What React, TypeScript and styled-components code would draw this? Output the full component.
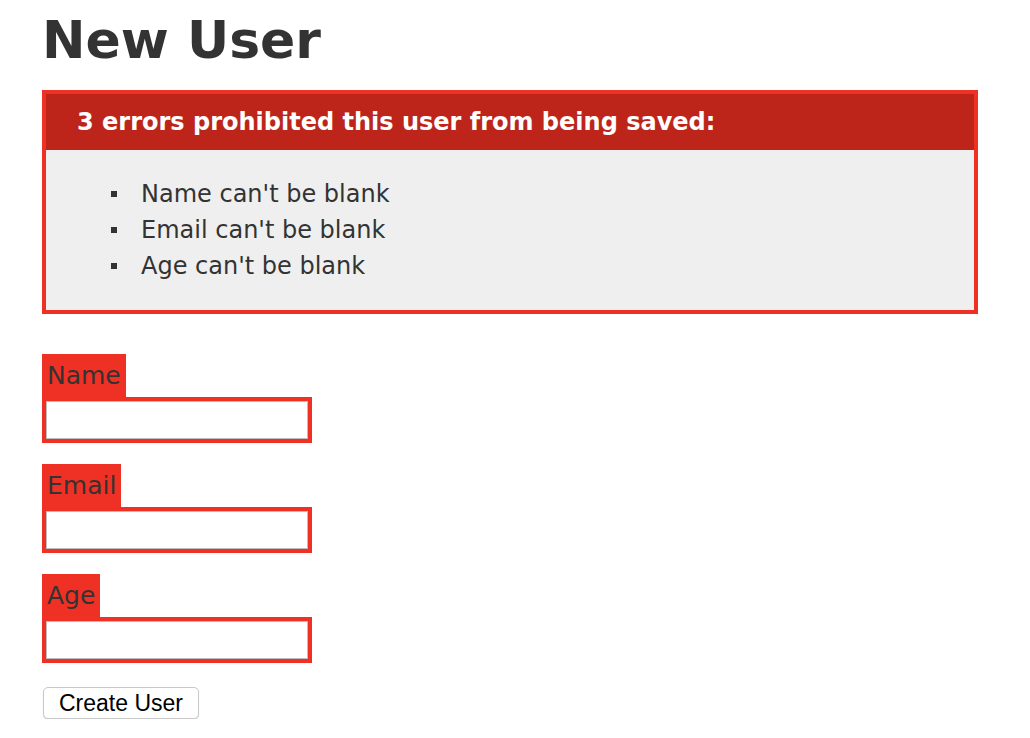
import React from "react";
import styled, { createGlobalStyle } from "styled-components";

const fields = ["Name", "Email", "Age"];

export default function App() {
  return (
    <>
      <GlobalStyle />
      <Page>
        <Title>New User</Title>

        <ErrorExplanation>
          <ErrorHeader>3 errors prohibited this user from being saved:</ErrorHeader>
          <ErrorList>
            {fields.map((f) => (
              <ErrorItem key={f}>{f} can't be blank</ErrorItem>
            ))}
          </ErrorList>
        </ErrorExplanation>

        <Form onSubmit={(e) => e.preventDefault()}>
          {fields.map((f) => (
            <Field key={f}>
              <FieldWithErrors>
                <Label htmlFor={"user_" + f.toLowerCase()}>{f}</Label>
              </FieldWithErrors>
              <FieldWithErrors>
                <TextInput id={"user_" + f.toLowerCase()} type="text" />
              </FieldWithErrors>
            </Field>
          ))}
          <Actions>
            <SubmitButton type="submit">Create User</SubmitButton>
          </Actions>
        </Form>
      </Page>
    </>
  );
}

const GlobalStyle = createGlobalStyle`
  html, body {
    margin: 0;
    padding: 0;
    background: #fff;
  }
  body {
    color: #333;
    font-family: "DejaVu Sans", Verdana, sans-serif;
  }
`;

const Page = styled.div`
  padding: 10px 42px 0 42px;
`;

const Title = styled.h1`
  margin: 0 0 20px;
  font-size: 52px;
  line-height: 60px;
  font-weight: bold;
  color: #333;
`;

const ErrorExplanation = styled.div`
  width: 928px;
  border: 4px solid #ee3124;
  background: #efefef;
`;

const ErrorHeader = styled.h2`
  margin: 0;
  height: 56px;
  padding-left: 31px;
  background: #bd251a;
  color: #fff;
  font-size: 24px;
  line-height: 56px;
  font-weight: bold;
`;

const ErrorList = styled.ul`
  margin: 0;
  padding: 26px 0 26px 65px;
  list-style: none;
  font-size: 24px;
  line-height: 36px;
  color: #333;
`;

const ErrorItem = styled.li`
  display: flex;
  align-items: center;

  &::before {
    content: "";
    width: 6px;
    height: 6px;
    margin-right: 24px;
    background: #333;
    flex-shrink: 0;
  }
`;

const Form = styled.form`
  margin-top: 40px;
`;

const Field = styled.div`
  margin-bottom: 21px;
`;

const FieldWithErrors = styled.div`
  display: table;
  padding: 4px;
  background: #ee3124;
`;

const Label = styled.label`
  display: block;
  padding: 0 1px;
  font-size: 25px;
  line-height: 35px;
  color: #333;
`;

const TextInput = styled.input`
  display: block;
  box-sizing: border-box;
  width: 262px;
  height: 38px;
  margin: 0;
  border: 1px solid #bdbdbd;
  background: #fff;
  outline: none;
`;

const Actions = styled.div`
  padding-top: 3px;
`;

const SubmitButton = styled.button`
  box-sizing: border-box;
  width: 156px;
  height: 32px;
  margin-left: 1px;
  padding: 0;
  border: 1px solid #c9c9c9;
  border-radius: 5px;
  background: #fff;
  box-shadow: 0 1px 1px rgba(0, 0, 0, 0.15);
  color: #000;
  font-family: "Liberation Sans", Arial, sans-serif;
  font-size: 23px;
  line-height: 30px;
`;
